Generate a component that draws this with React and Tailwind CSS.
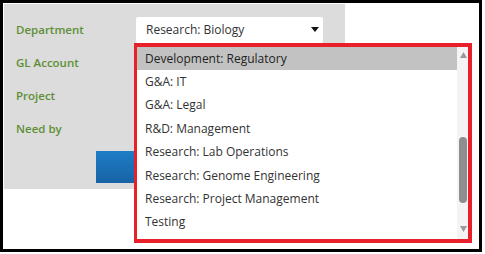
import React from 'react'

const labels = ['Department', 'GL Account', 'Project', 'Need by']

const options = [
  'Development: Regulatory',
  'G&A: IT',
  'G&A: Legal',
  'R&D: Management',
  'Research: Lab Operations',
  'Research: Genome Engineering',
  'Research: Project Management',
  'Testing',
]

// ─── Dropdown overlay ─────────────────────────────────────────────────────────
function OptionList() {
  return (
    <div className="absolute left-[131px] top-[40px] w-[338px] h-[200px] border-[4px] border-l-[3px] border-[#e8202a] bg-white flex">
      <div className="flex-1 overflow-hidden">
        {options.map((o, i) => (
          <div
            key={o}
            className={
              i === 0
                ? 'h-[23.4px] pl-[8px] flex items-center bg-[#c2c2c2] text-[#222]'
                : 'h-[23.4px] pl-[8px] flex items-center text-[#333]'
            }
          >
            {o}
          </div>
        ))}
      </div>
      {/* scrollbar */}
      <div className="w-[11px] bg-[#f4f4f4] relative">
        <svg className="absolute left-[3px] top-[5px]" width="7" height="6" viewBox="0 0 7 6">
          <polygon points="3.5 0, 7 6, 0 6" fill="#9a9a9a" />
        </svg>
        <div className="absolute left-[2px] top-[90px] w-[8px] h-[66px] rounded-[4px] bg-[#8e8e8e]" />
        <svg className="absolute left-[3px] top-[179px]" width="7" height="6" viewBox="0 0 7 6">
          <polygon points="0 0, 7 0, 3.5 6" fill="#9a9a9a" />
        </svg>
      </div>
    </div>
  )
}

export default function App() {
  return (
    <div
      className="w-[485px] h-[254px] bg-white text-[12px]"
      style={{ fontFamily: '"Open Sans", "Noto Sans", sans-serif' }}
    >
      <div className="relative w-[482px] h-[252px] border-[3px] border-black p-[1px]">
        <div className="w-[341px] h-[185px] bg-[#dcdcdc] pt-[9px] pl-[12px]">
          {labels.map((l, i) => (
            <div key={l} className="h-[33px] flex items-center">
              <div className="w-[120px] font-semibold text-[11.5px] text-[#5f8f35]">{l}</div>
              {i === 0 && (
                <div className="w-[187px] h-[26px] bg-white rounded-[2px] flex items-center justify-between pl-[10px] pr-[4px] text-[#333]">
                  <span>Research: Biology</span>
                  <svg width="8" height="5" viewBox="0 0 8 5">
                    <polygon points="0 0, 8 0, 4 5" fill="#111" />
                  </svg>
                </div>
              )}
            </div>
          ))}
          <div className="ml-[80px] mt-[6px] w-[80px] h-[32px] bg-gradient-to-b from-[#1e7dc6] to-[#1763a6]" />
        </div>
        <OptionList />
      </div>
    </div>
  )
}
